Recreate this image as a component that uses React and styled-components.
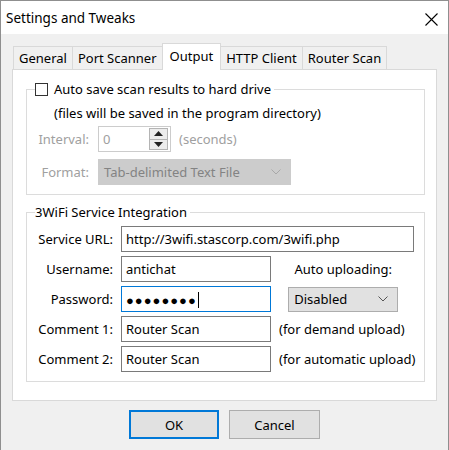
import styled, { createGlobalStyle } from 'styled-components';

const GlobalStyle = createGlobalStyle`
  html, body {
    margin: 0;
    padding: 0;
    background: #f0f0f0;
  }
`;

const Window = styled.div`
  width: 449px;
  height: 450px;
  box-sizing: border-box;
  border: 1px solid #8f8f8f;
  border-bottom: none;
  display: flex;
  flex-direction: column;
  background: #f0f0f0;
  font-family: "Noto Sans", "Open Sans", sans-serif;
  font-size: 13px;
  color: #000;
  overflow: hidden;
`;

const TitleBar = styled.div`
  height: 33px;
  flex-shrink: 0;
  background: #fff;
  display: flex;
  align-items: center;
  justify-content: space-between;
  padding: 0 10px 0 5px;
`;

const Title = styled.span`
  font-size: 13.5px;
`;

const CloseButton = styled.svg`
  margin-top: 4px;
`;

const Body = styled.div`
  flex: 1;
  padding: 9px 11px 0 11px;
  display: flex;
  flex-direction: column;
`;

const TabStrip = styled.div`
  display: flex;
  align-items: flex-end;
  height: 27px;
  padding-left: 2px;
  margin-bottom: -1px;
  position: relative;
  z-index: 1;
`;

const Tab = styled.div`
  height: ${p => (p.$active ? '27px' : '24px')};
  box-sizing: border-box;
  padding: 0 ${p => (p.$active ? '7px' : '5px')} ${p => (p.$active ? '3px' : '0')};
  margin-left: -1px;
  border: 1px solid #d9d9d9;
  border-bottom: ${p => (p.$active ? 'none' : '1px solid #d9d9d9')};
  background: ${p => (p.$active ? '#fff' : '#f0f0f0')};
  display: flex;
  align-items: center;
  white-space: nowrap;
`;

const Panel = styled.div`
  height: 332px;
  box-sizing: border-box;
  background: #fff;
  border: 1px solid #d9d9d9;
  padding: 11px 11px 0 13px;
`;

const Group = styled.fieldset`
  margin: ${p => p.$gapTop || 0}px 0 0 0;
  border: 1px solid #dcdcdc;
  padding: ${p => p.$padTop}px 10px 9px 8px;
  min-width: 0;
`;

const Legend = styled.legend`
  padding: 0 3px 0 0;
  line-height: 16px;
  display: flex;
  align-items: center;
  gap: 6px;
`;

const CheckBox = styled.span`
  width: 13px;
  height: 13px;
  box-sizing: border-box;
  border: 1px solid #333;
  background: #fff;
`;

const Note = styled.div`
  margin-left: 19px;
  line-height: 16px;
`;

const OptionGrid = styled.div`
  display: grid;
  grid-template-columns: 54px auto;
  column-gap: 9px;
  row-gap: 7px;
  margin-top: 5px;
  align-items: center;
`;

const Label = styled.div`
  text-align: right;
  white-space: nowrap;
  color: ${p => (p.$disabled ? '#a0a0a0' : '#000')};
`;

const InlineRow = styled.div`
  display: flex;
  align-items: center;
  gap: 8px;
  color: #a0a0a0;
`;

const Field = styled.div`
  width: ${p => p.$w}px;
  height: 26px;
  box-sizing: border-box;
  border: 1px solid ${p => p.$border || '#7a7a7a'};
  background: #fff;
  display: flex;
  align-items: center;
  justify-content: space-between;
  padding: 0 2px 0 4px;
  color: ${p => p.$color || '#000'};
  white-space: nowrap;
`;

const Spinner = styled.div`
  width: 19px;
  height: 22px;
  box-sizing: border-box;
  border: 1px solid #b4b4b4;
  background: #ececec;
  display: flex;
  flex-direction: column;
`;

const SpinHalf = styled.div`
  flex: 1;
  display: flex;
  align-items: center;
  justify-content: center;
  border-top: ${p => (p.$bottom ? '1px solid #b4b4b4' : 'none')};
`;

const Combo = styled.div`
  width: ${p => p.$w}px;
  height: ${p => p.$h || 26}px;
  box-sizing: border-box;
  border: 1px solid ${p => (p.$disabled ? '#cccccc' : '#adadad')};
  background: ${p => (p.$disabled ? '#cccccc' : '#e1e1e1')};
  color: ${p => (p.$disabled ? '#838383' : '#000')};
  display: flex;
  align-items: center;
  justify-content: space-between;
  padding: 0 9px 0 5px;
  white-space: nowrap;
`;

const ServiceGrid = styled.div`
  display: grid;
  grid-template-columns: 78px 150px 1fr;
  grid-auto-rows: 26px;
  column-gap: 8px;
  row-gap: 4px;
  align-items: center;
`;

const Wide = styled.div`
  grid-column: 2 / 4;
`;

const Center = styled.div`
  justify-self: center;
  margin-right: 8px;
  white-space: nowrap;
`;

const Hint = styled.div`
  white-space: nowrap;
`;

const Caret = styled.span`
  display: inline-block;
  width: 1px;
  height: 16px;
  background: #000;
  vertical-align: middle;
  margin-left: 1px;
`;

const Dots = styled.span`
  letter-spacing: 1px;
  font-size: 13px;
  vertical-align: middle;
`;

const ButtonRow = styled.div`
  display: flex;
  justify-content: center;
  gap: 10px;
  margin-top: 9px;
`;

const Button = styled.div`
  width: ${p => p.$w}px;
  height: 29px;
  box-sizing: border-box;
  background: #e1e1e1;
  border: ${p => (p.$primary ? '2px solid #0078d7' : '1px solid #adadad')};
  display: flex;
  align-items: center;
  justify-content: center;
`;

const Chevron = ({ color = '#000' }) => (
  <svg width="10" height="6" viewBox="0 0 10 6">
    <path d="M0.5 0.5L5 5L9.5 0.5" fill="none" stroke={color} strokeWidth="1" />
  </svg>
);

const Arrow = ({ down }) => (
  <svg width="9" height="5" viewBox="0 0 9 5">
    <path d={down ? 'M0 0H9L4.5 5Z' : 'M0 5H9L4.5 0Z'} fill="#222" />
  </svg>
);

const tabs = ['General', 'Port Scanner', 'Output', 'HTTP Client', 'Router Scan'];

export default function App() {
  return (
    <>
      <GlobalStyle />
      <Window>
        <TitleBar>
          <Title>Settings and Tweaks</Title>
          <CloseButton width="13" height="13" viewBox="0 0 13 13">
            <path d="M0.5 0.5L12.5 12.5M12.5 0.5L0.5 12.5" stroke="#000" strokeWidth="1.1" />
          </CloseButton>
        </TitleBar>
        <Body>
          <TabStrip>
            {tabs.map(t => (
              <Tab key={t} $active={t === 'Output'}>{t}</Tab>
            ))}
          </TabStrip>
          <Panel>
            <Group $padTop={8}>
              <Legend>
                <CheckBox />
                Auto save scan results to hard drive
              </Legend>
              <Note>(files will be saved in the program directory)</Note>
              <OptionGrid>
                <Label $disabled>Interval:</Label>
                <InlineRow>
                  <Field $w={73} $border="#cccccc" $color="#a0a0a0">
                    0
                    <Spinner>
                      <SpinHalf><Arrow /></SpinHalf>
                      <SpinHalf $bottom><Arrow down /></SpinHalf>
                    </Spinner>
                  </Field>
                  (seconds)
                </InlineRow>
                <Label $disabled>Format:</Label>
                <Combo $w={193} $disabled>
                  Tab-delimited Text File
                  <Chevron color="#a8a8a8" />
                </Combo>
              </OptionGrid>
            </Group>

            <Group $padTop={6} $gapTop={9}>
              <Legend>3WiFi Service Integration</Legend>
              <ServiceGrid>
                <Label>Service URL:</Label>
                <Wide>
                  <Field $w={293}>http://3wifi.stascorp.com/3wifi.php</Field>
                </Wide>

                <Label>Username:</Label>
                <Field $w={150}>antichat</Field>
                <Center>Auto uploading:</Center>

                <Label>Password:</Label>
                <Field $w={150} $border="#0078d7">
                  <span><Dots>●●●●●●●●</Dots><Caret /></span>
                </Field>
                <Center>
                  <Combo $w={110} $h={25}>
                    Disabled
                    <Chevron color="#555" />
                  </Combo>
                </Center>

                <Label>Comment 1:</Label>
                <Field $w={150}>Router Scan</Field>
                <Hint>(for demand upload)</Hint>

                <Label>Comment 2:</Label>
                <Field $w={150}>Router Scan</Field>
                <Hint>(for automatic upload)</Hint>
              </ServiceGrid>
            </Group>
          </Panel>
          <ButtonRow>
            <Button $w={90} $primary>OK</Button>
            <Button $w={91}>Cancel</Button>
          </ButtonRow>
        </Body>
      </Window>
    </>
  );
}
